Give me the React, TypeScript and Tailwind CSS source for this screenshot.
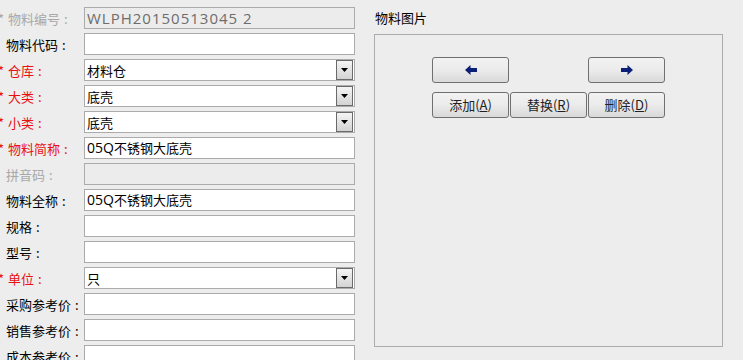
import React from 'react';

type Field = {
  label: string;
  star?: boolean;
  red?: boolean;
  disabled?: boolean;
  select?: boolean;
  value?: React.ReactNode;
};

const latin = { fontFamily: '"Open Sans", "Noto Sans", sans-serif' };

const Q05: React.FC = () => (
  <span className="text-[14px]" style={latin}>
    05Q
  </span>
);

const fields: Field[] = [
  {
    label: '物料编号',
    star: true,
    disabled: true,
    value: (
      <span className="text-[15px] tracking-[1px]" style={latin}>
        WLPH20150513045 2
      </span>
    ),
  },
  { label: '物料代码' },
  { label: '仓库', star: true, red: true, select: true, value: '材料仓' },
  { label: '大类', star: true, red: true, select: true, value: '底壳' },
  { label: '小类', star: true, red: true, select: true, value: '底壳' },
  {
    label: '物料简称',
    star: true,
    red: true,
    value: (
      <>
        <Q05 />
        不锈钢大底壳
      </>
    ),
  },
  { label: '拼音码', disabled: true },
  {
    label: '物料全称',
    value: (
      <>
        <Q05 />
        不锈钢大底壳
      </>
    ),
  },
  { label: '规格' },
  { label: '型号' },
  { label: '单位', star: true, red: true, select: true, value: '只' },
  { label: '采购参考价' },
  { label: '销售参考价' },
  { label: '成本参考价' },
];

const font = { fontFamily: '"Noto Sans CJK SC", "Noto Sans", sans-serif' };

const DropButton: React.FC = () => (
  <div className="h-[20px] w-[17px] mr-[1px] flex items-center justify-center border border-[#6a6a6a] bg-gradient-to-b from-[#f4f4f4] to-[#d3d3d3]">
    <svg width="7" height="4" viewBox="0 0 7 4">
      <polygon points="0,0 7,0 3.5,4" fill="#000" />
    </svg>
  </div>
);

const Row: React.FC<{ f: Field }> = ({ f }) => {
  const color = f.disabled ? 'text-[#a8a8a8]' : f.red ? 'text-[#e81010]' : 'text-[#000]';
  return (
    <div className="flex items-center h-[22px]">
      <div className={`w-[84px] pl-[6px] text-[13px] leading-none whitespace-nowrap ${color}`}>
        {f.star && <span className="ml-[-8px] mr-[4px]">*</span>}
        {f.label}
        <span className="ml-[4px]">:</span>
      </div>
      <div
        className={`flex items-center w-[271px] h-[22px] border border-[#ababab] ${
          f.disabled ? 'bg-[#ececec]' : 'bg-white'
        }`}
      >
        <div
          className={`flex-1 pl-[2px] text-[13px] leading-none whitespace-nowrap ${
            f.disabled ? 'text-[#6d6d6d]' : 'text-black'
          }`}
        >
          {f.value}
        </div>
        {f.select && <DropButton />}
      </div>
    </div>
  );
};

const Btn: React.FC<{ children: React.ReactNode }> = ({ children }) => (
  <div className="w-[77px] h-[26px] flex items-center justify-center rounded-[3px] border border-[#707070] bg-gradient-to-b from-[#f2f2f2] via-[#ebebeb] to-[#d9d9d9] text-[13px] text-[#222]">
    {children}
  </div>
);

const Arrow: React.FC<{ dir: 'left' | 'right' }> = ({ dir }) => (
  <svg width="12" height="10" viewBox="0 0 12 10">
    {dir === 'left' ? (
      <polygon points="0,5 5.5,0 5.5,3 12,3 12,7 5.5,7 5.5,10" fill="#0b1f78" />
    ) : (
      <polygon points="12,5 6.5,0 6.5,3 0,3 0,7 6.5,7 6.5,10" fill="#0b1f78" />
    )}
  </svg>
);

export default function App() {
  return (
    <div className="w-[743px] h-[360px] overflow-hidden bg-[#ededed] flex" style={font}>
      <div className="flex flex-col gap-[4px] pt-[7px]">
        {fields.map((f, i) => (
          <Row key={i} f={f} />
        ))}
      </div>
      <div className="ml-[19px] flex flex-col">
        <div className="pt-[10px] h-[34px] text-[13px] leading-[16px] text-black pl-[1px]">物料图片</div>
        <div className="w-[349px] h-[313px] border border-[#acacac] pt-[22px] pl-[57px]">
          <div className="flex w-[233px] justify-between">
            <Btn>
              <Arrow dir="left" />
            </Btn>
            <Btn>
              <Arrow dir="right" />
            </Btn>
          </div>
          <div className="flex gap-[1px] mt-[9px]">
            <Btn>
              添加(<span className="underline">A</span>)
            </Btn>
            <Btn>
              替换(<span className="underline">R</span>)
            </Btn>
            <Btn>
              删除(<span className="underline">D</span>)
            </Btn>
          </div>
        </div>
      </div>
    </div>
  );
}
